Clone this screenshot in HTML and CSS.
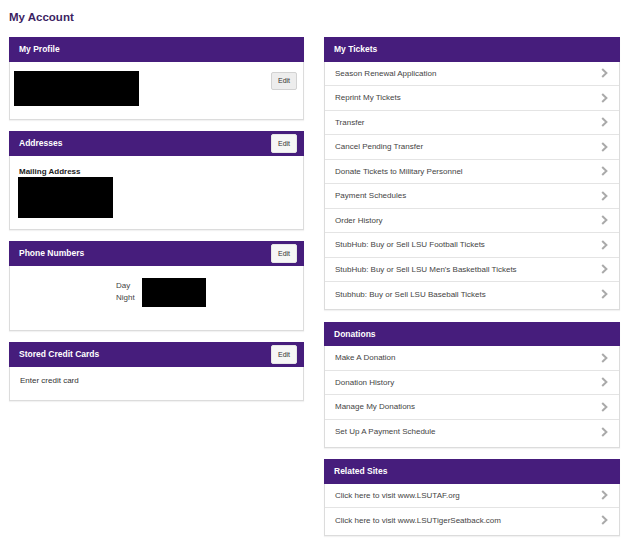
FILE: index.html
```html
<!DOCTYPE html>
<html lang="en">
<head>
    <meta charset="UTF-8">
    <title>My Account</title>
    <link rel="stylesheet" href="styles.css">
</head>
<body>
    <div class="page">
        <h1 class="page-title">My Account</h1>

        <div class="columns">
            <!-- left column -->
            <div class="column">
                <div class="panel">
                    <div class="panel-header">My Profile</div>
                    <div class="panel-body profile-body">
                        <div class="redacted profile-redacted"></div>
                        <button class="edit-btn">Edit</button>
                    </div>
                </div>

                <div class="panel">
                    <div class="panel-header">
                        Addresses
                        <button class="edit-btn header-edit">Edit</button>
                    </div>
                    <div class="panel-body address-body">
                        <div class="field-label">Mailing Address</div>
                        <div class="redacted address-redacted"></div>
                    </div>
                </div>

                <div class="panel">
                    <div class="panel-header">
                        Phone Numbers
                        <button class="edit-btn header-edit">Edit</button>
                    </div>
                    <div class="panel-body phone-body">
                        <div class="phone-labels">
                            <div>Day</div>
                            <div>Night</div>
                        </div>
                        <div class="redacted phone-redacted"></div>
                    </div>
                </div>

                <div class="panel">
                    <div class="panel-header">
                        Stored Credit Cards
                        <button class="edit-btn header-edit">Edit</button>
                    </div>
                    <div class="panel-body card-body">Enter credit card</div>
                </div>
            </div>

            <!-- right column -->
            <div class="column">
                <div class="panel">
                    <div class="panel-header">My Tickets</div>
                    <ul class="link-list">
                        <li><a href="#">Season Renewal Application</a></li>
                        <li><a href="#">Reprint My Tickets</a></li>
                        <li><a href="#">Transfer</a></li>
                        <li><a href="#">Cancel Pending Transfer</a></li>
                        <li><a href="#">Donate Tickets to Military Personnel</a></li>
                        <li><a href="#">Payment Schedules</a></li>
                        <li><a href="#">Order History</a></li>
                        <li><a href="#">StubHub: Buy or Sell LSU Football Tickets</a></li>
                        <li><a href="#">StubHub: Buy or Sell LSU Men's Basketball Tickets</a></li>
                        <li><a href="#">Stubhub: Buy or Sell LSU Baseball Tickets</a></li>
                    </ul>
                </div>

                <div class="panel">
                    <div class="panel-header">Donations</div>
                    <ul class="link-list">
                        <li><a href="#">Make A Donation</a></li>
                        <li><a href="#">Donation History</a></li>
                        <li><a href="#">Manage My Donations</a></li>
                        <li><a href="#">Set Up A Payment Schedule</a></li>
                    </ul>
                </div>

                <div class="panel">
                    <div class="panel-header">Related Sites</div>
                    <ul class="link-list">
                        <li><a href="#">Click here to visit www.LSUTAF.org</a></li>
                        <li><a href="#">Click here to visit www.LSUTigerSeatback.com</a></li>
                    </ul>
                </div>
            </div>
        </div>
    </div>

    <script>
        // add the chevron to every list link
        document.querySelectorAll('.link-list a').forEach(function(link) {
            link.insertAdjacentHTML('beforeend',
                '<svg class="chevron" width="7" height="10" viewBox="0 0 7 10">' +
                '<polyline points="1.2,1 5.4,5 1.2,9" fill="none" stroke="#aaa" stroke-width="2"/></svg>');
        });
    </script>
</body>
</html>
```

FILE: styles.css
```css
body {
    margin: 0;
    font-family: "Liberation Sans", Arial, sans-serif;
    font-size: 8px;
    color: #333;
    background-color: #fff;
}

.page {
    padding: 10px 9px 0 9px;
}

.page-title {
    margin: 0 0 13px 0;
    font-size: 11.5px;
    line-height: 14px;
    font-weight: bold;
    color: #3c1f63;
}

.columns {
    display: grid;
    grid-template-columns: 295px 296px;
    column-gap: 20px;
    align-items: start;
}

.panel {
    border: 1px solid #dcdcdc;
    border-top: none;
    margin-bottom: 11.5px;
    box-shadow: 0 1px 1px rgba(0, 0, 0, 0.05);
    background-color: #fff;
}

.panel-header {
    display: flex;
    justify-content: space-between;
    align-items: center;
    height: 24.5px;
    margin: 0 -1px;
    padding: 0 7px 0 10px;
    background-color: #461d7c;
    color: #fff;
    font-size: 8.5px;
    font-weight: bold;
}

.edit-btn {
    width: 26px;
    height: 18px;
    padding: 0;
    font-family: inherit;
    font-size: 7px;
    color: #333;
    background-color: #ededed;
    border: 1px solid #d2d2d2;
    border-radius: 2px;
}

.header-edit {
    height: 19px;
    background-color: #f6f6f6;
    border-color: #e6e6e6;
}

.redacted {
    background-color: #000;
}

/* left column bodies */
.profile-body {
    display: flex;
    justify-content: space-between;
    align-items: flex-start;
    padding: 9px 6px 13px 4px;
}

.profile-body .edit-btn {
    margin-top: 1px;
}

.profile-redacted {
    width: 125px;
    height: 35px;
}

.address-body {
    padding: 10px 9px 11px 8px;
}

.field-label {
    padding-left: 1px;
    font-weight: bold;
    line-height: 11px;
    color: #222;
}

.address-redacted {
    width: 95px;
    height: 41px;
}

.phone-body {
    display: flex;
    align-items: flex-start;
    padding: 12px 0 23px 106px;
}

.phone-labels {
    margin-top: 2px;
    line-height: 12px;
    color: #444;
}

.phone-redacted {
    width: 64px;
    height: 29px;
    margin-left: 7px;
}

.card-body {
    padding: 8px 10px 13px 10px;
    line-height: 12px;
    color: #333;
}

/* right column link lists */
.link-list {
    list-style: none;
    margin: 0;
    padding: 0 0 2.5px 0;
}

.link-list li {
    border-bottom: 1px solid #e4e4e4;
}

.link-list li:last-child {
    border-bottom: none;
}

.link-list a {
    display: flex;
    justify-content: space-between;
    align-items: center;
    box-sizing: border-box;
    height: 23.5px;
    padding: 0 11px 0 10px;
    color: #444;
    text-decoration: none;
}

.link-list li:last-child a {
    height: 24.5px;
}

.chevron {
    display: block;
}
```
